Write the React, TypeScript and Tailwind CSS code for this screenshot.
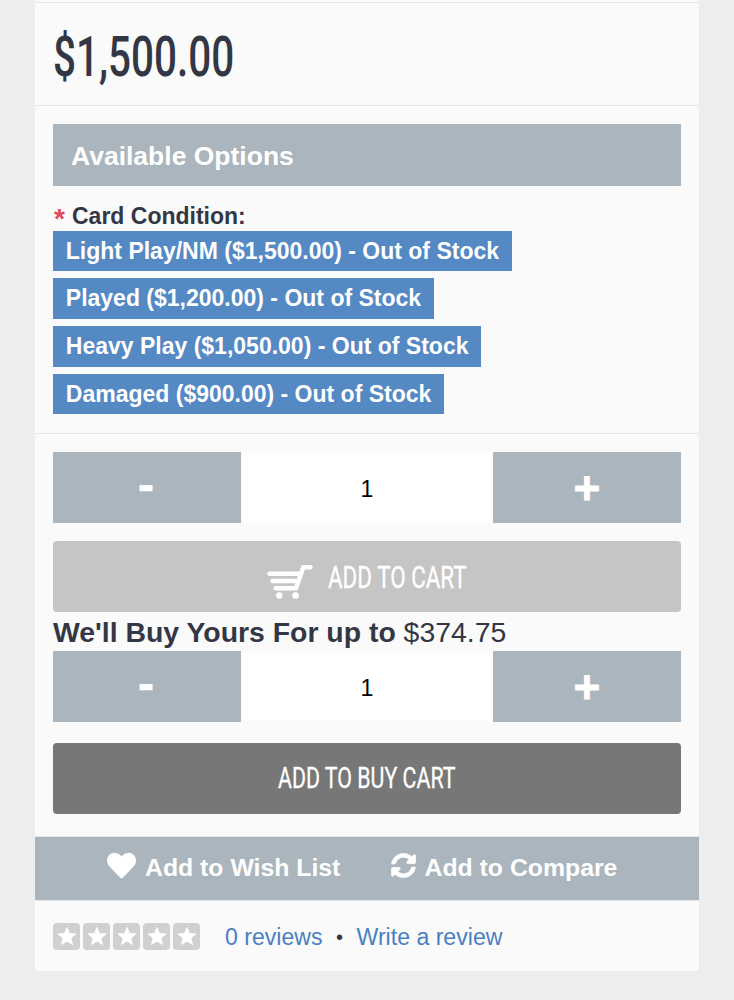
import { useState } from "react";
import { FaHeart, FaSyncAlt } from "react-icons/fa";

const conditions = [
  "Light Play/NM ($1,500.00) - Out of Stock",
  "Played ($1,200.00) - Out of Stock",
  "Heavy Play ($1,050.00) - Out of Stock",
  "Damaged ($900.00) - Out of Stock",
];

function CartIcon() {
  return (
    <svg
      width="46"
      height="36"
      viewBox="0 0 46 36"
      fill="none"
      stroke="currentColor"
      strokeWidth="4.5"
      strokeLinecap="round"
      strokeLinejoin="round"
    >
      <path d="M2.4 10.7H31M5.6 18H29M8.7 25.2H29L36.3 4.2H43.5" />
      <circle cx="12.3" cy="32.5" r="3.3" fill="currentColor" stroke="none" />
      <circle cx="28.6" cy="32.5" r="3.3" fill="currentColor" stroke="none" />
    </svg>
  );
}

function Star() {
  return (
    <span className="flex h-[27px] w-[27px] items-center justify-center rounded-[4px] bg-[#d0d0d0]">
      <svg width="22" height="22" viewBox="0 0 24 24" fill="#fff">
        <path d="M12 1.5l3 7.3 7.8.6-6 5.1 1.9 7.7L12 18l-6.7 4.2 1.9-7.7-6-5.1 7.8-.6z" />
      </svg>
    </span>
  );
}

function Quantity() {
  const [quantity, setQuantity] = useState(1);

  return (
    <div className="flex h-[71px]">
      <button
        className="w-[188px] bg-[#aab5bd] pr-[2px] pb-[6px] text-[48px] leading-none font-bold text-white [-webkit-text-stroke:0.6px_white]"
        onClick={() => setQuantity(Math.max(1, quantity - 1))}
      >
        -
      </button>
      <input
        type="text"
        value={quantity}
        onChange={(e) => setQuantity(Number(e.target.value) || 1)}
        className="w-[252px] border-2 border-[#fcfcfc] bg-white pt-[3px] text-center text-[23.2px] text-black"
      />
      <button
        className="w-[188px] bg-[#aab5bd] text-[46px] leading-none font-bold text-white [-webkit-text-stroke:0.8px_white]"
        onClick={() => setQuantity(quantity + 1)}
      >
        +
      </button>
    </div>
  );
}

export default function App() {
  return (
    <div className="h-[1000px] bg-[#ededed] pl-[35px] font-['Liberation_Sans',Arial,sans-serif] text-[#333745]">
      <div className="h-[971px] w-[664px] rounded-b-[3px] bg-[#fafafa]">
        {/* Price */}
        <div className="h-[2px]" />
        <div className="h-[103px] border-t border-[#e6e6e6] px-[18px] pt-[5px]">
          <div className="w-0 origin-left scale-x-[0.735] font-['Roboto',sans-serif] text-[55px] leading-[98px] font-medium whitespace-nowrap">
            $1,500.00
          </div>
        </div>

        {/* Options */}
        <div className="h-[328px] border-t border-[#e6e6e6] px-[18px] pt-[18px]">
          <h3 className="h-[62px] bg-[#aab5bd] pl-[18px] text-[26.5px] leading-[64px] font-bold text-white">
            Available Options
          </h3>
          <div className="flex h-[44.6px] pt-[15px] text-[23px] leading-[30px] font-bold">
            <span className="w-[19px] pl-[1px] text-[28px] leading-[35px] text-[#dd4a5c]">*</span>
            <span>Card Condition:</span>
          </div>
          <div className="flex flex-col items-start gap-[7.4px]">
            {conditions.map((c) => (
              <span
                key={c}
                className="h-[40.4px] bg-[#5489c4] px-[12.8px] text-[23px] leading-[41.8px] font-bold whitespace-nowrap text-white"
              >
                {c}
              </span>
            ))}
          </div>
        </div>

        {/* Cart */}
        <div className="h-[403px] border-t border-[#e6e6e6] px-[18px] pt-[18px]">
          <Quantity />
          <button className="mt-[18px] flex h-[71px] w-full items-center rounded-[4px] bg-[#c5c5c5] pl-[214px] text-white">
            <span className="pt-[9px]">
              <CartIcon />
            </span>
            <span className="ml-[15px] w-0 origin-left scale-x-[0.7] font-['Roboto',sans-serif] text-[32px] whitespace-nowrap [-webkit-text-stroke:0.3px_white]">
              ADD TO CART
            </span>
          </button>
          <div className="h-[39px] text-[28.4px] leading-[40px]">
            <b>We'll Buy Yours For up to</b> $374.75
          </div>
          <Quantity />
          <button className="mt-[21px] flex h-[71px] w-full items-center rounded-[4px] bg-[#777777] pl-[225px] text-white">
            <span className="w-0 origin-left scale-x-[0.724] font-['Roboto',sans-serif] text-[29.5px] whitespace-nowrap [-webkit-text-stroke:0.3px_white]">
              ADD TO BUY CART
            </span>
          </button>
        </div>

        {/* Wish list and compare */}
        <div className="flex h-[65px] border-y border-[#e2e6e8] bg-[#aab5bd] pl-[72px] text-[24.8px] leading-[62px] font-bold text-white">
          <a className="flex w-[284px]">
            <FaHeart className="mt-[14px] mr-[9px] h-[29px] w-[29px]" />
            Add to Wish List
          </a>
          <a className="flex">
            <FaSyncAlt className="mt-[16px] mr-[8.5px] h-[25px] w-[25px] stroke-white stroke-[14px]" />
            Add to Compare
          </a>
        </div>

        {/* Rating */}
        <div className="flex h-[70px] items-center px-[18px] text-[23.1px] text-[#4a80c2]">
          <div className="mr-[25px] flex gap-[3px]">
            <Star />
            <Star />
            <Star />
            <Star />
            <Star />
          </div>
          <a className="pt-[2px]">0 reviews</a>
          <span className="w-[34px] pt-[2px] text-center text-[20px] text-[#333745]">•</span>
          <a className="pt-[2px]">Write a review</a>
        </div>
      </div>
    </div>
  );
}
